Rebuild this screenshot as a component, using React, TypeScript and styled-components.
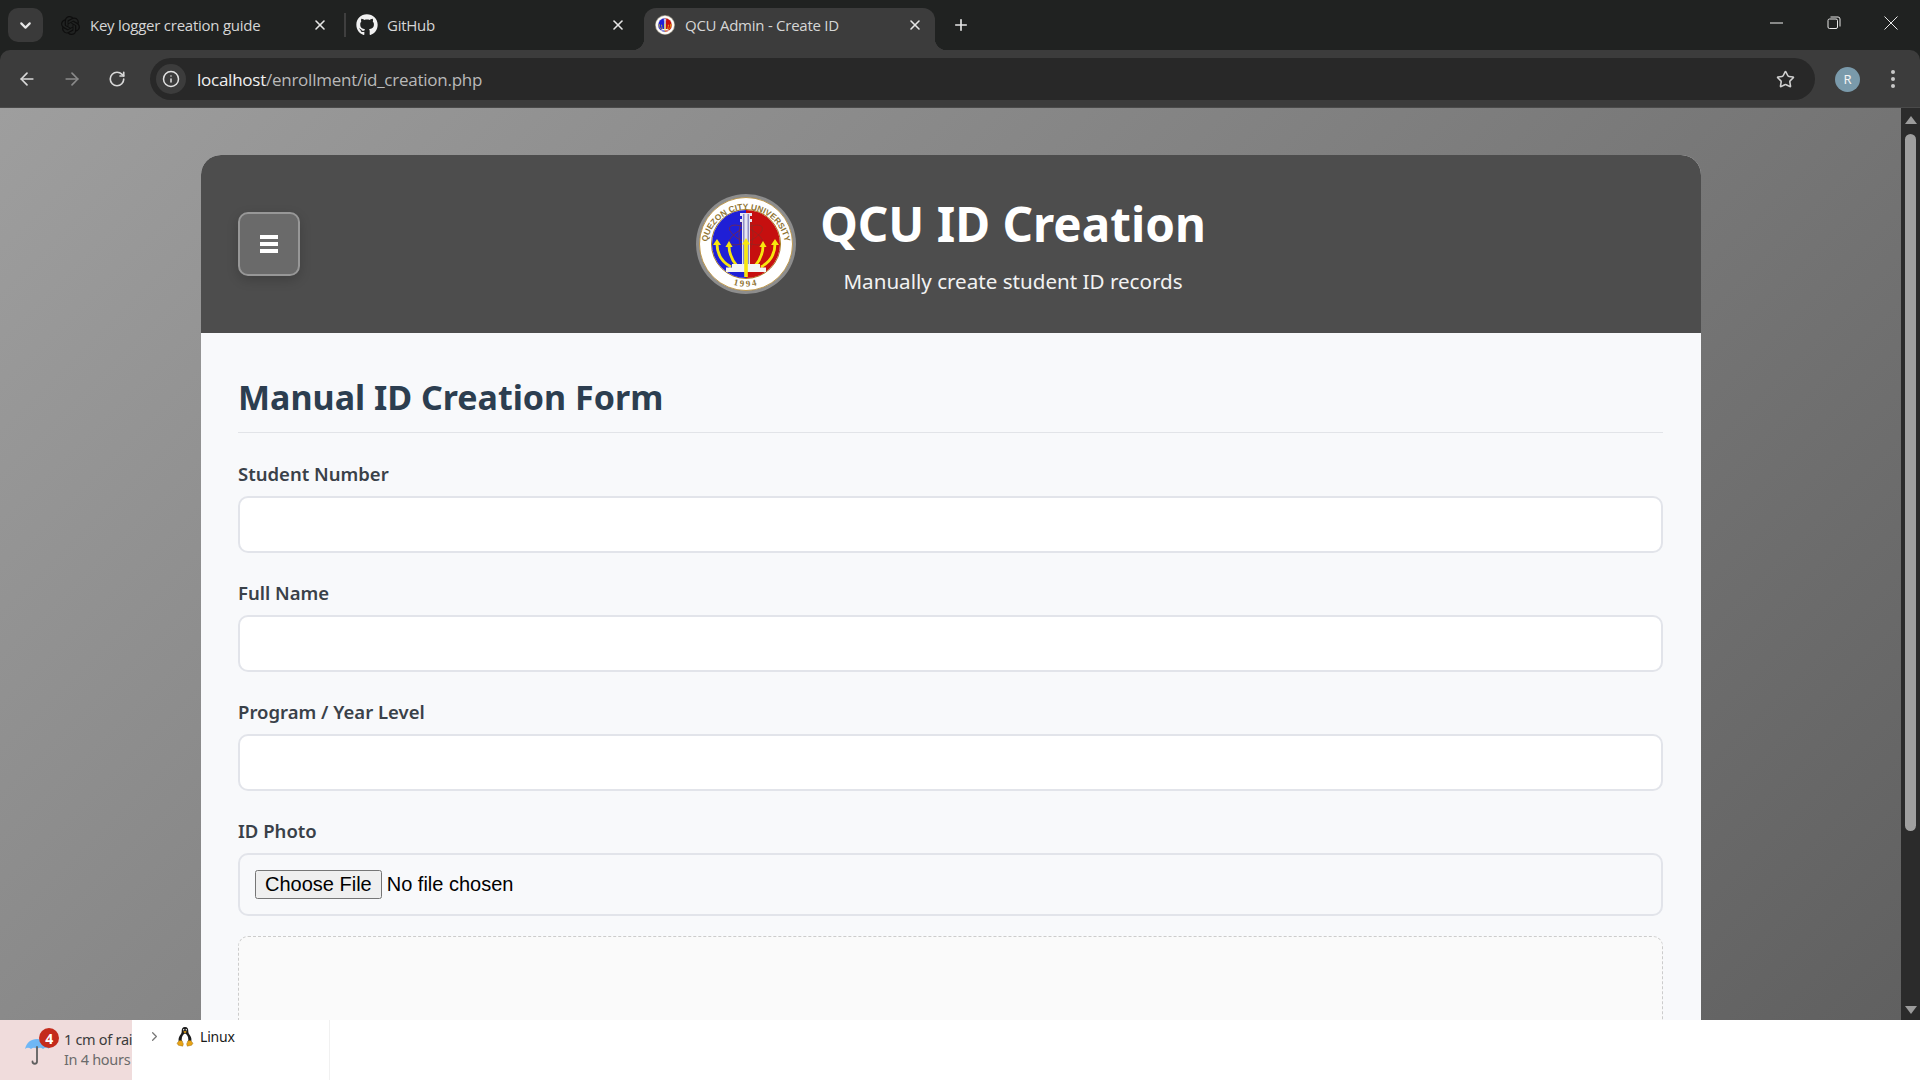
import { ArrowLeft, ArrowRight, ChevronDown, ChevronRight, Info, Plus, RotateCw, Star, X } from 'lucide-react'
import { FaGithub } from 'react-icons/fa'
import { SiOpenai } from 'react-icons/si'
import styled, { createGlobalStyle } from 'styled-components'

const fields = ['Student Number', 'Full Name', 'Program / Year Level']

function Seal({ size, plain }: { size: number; plain?: boolean }) {
  return (
    <svg width={size} height={size} viewBox="0 0 100 100">
      <circle cx="50" cy="50" r="50" fill="#8d8d8d" />
      <circle cx="50" cy="50" r="46.5" fill="#fff" stroke="#b98a2e" strokeWidth="0.8" />
      <circle cx="50" cy="50" r="34.5" fill="#fff" stroke="#a87b20" strokeWidth="1" />
      <path d="M50 16a34 34 0 0 0 0 68z" fill="#1f1fd6" />
      <path d="M50 16a34 34 0 0 1 0 68z" fill="#c60f0f" />
      {!plain && (
        <>
          <defs>
            <path id="sealTop" d="M10.500 55a39.500 39.500 0 0 1 79 0" />
            <path id="sealBottom" d="M20 80a42 42 0 0 0 60 0" />
          </defs>
          <text fill="#8f7433" fontFamily="Liberation Sans, sans-serif" fontSize="8.4" fontWeight="700">
            <textPath href="#sealTop" startOffset="50%" textAnchor="middle">
              QUEZON CITY UNIVERSITY
            </textPath>
          </text>
          <text fill="#8f7433" fontFamily="Liberation Serif, serif" fontSize="9" fontWeight="700" letterSpacing="2">
            <textPath href="#sealBottom" startOffset="50%" textAnchor="middle">
              1994
            </textPath>
          </text>
          <g fill="none" stroke="#8a2b25" strokeWidth="0.6">
            <ellipse cx="50" cy="41" rx="18" ry="7" transform="rotate(25 50 41)" />
            <ellipse cx="50" cy="41" rx="18" ry="7" transform="rotate(-25 50 41)" />
            <ellipse cx="50" cy="41" rx="7" ry="17" />
          </g>
        </>
      )}
      <path d="M44 19h12v3h-2v3h2v3h-2v46h-8V28h-2v-3h2v-3h-2z" fill="#e6e6f2" />
      <path d="M47 20h1.500v52H47zM51.500 20H53v52h-1.500z" fill="#8e8ec8" />
      <g fill="none" stroke="#f7e70e" strokeWidth="2.8">
        <path d="M35 73C26 68 21 60 21 50" />
        <path d="M41 72C36 66 33 60 33 52" />
        <path d="M59 72C64 66 67 60 67 52" />
        <path d="M65 73C74 68 79 60 79 50" />
      </g>
      <g fill="#f7e70e">
        <path d="M21 45l-4 6h8z" />
        <path d="M33 47l-3.600 6h7.200z" />
        <path d="M67 47l-3.600 6h7.200z" />
        <path d="M79 45l-4 6h8z" />
      </g>
      <path d="M36 70h28v3.500h6V78H30v-4.500h6z" fill="#f4f4f4" />
      <path d="M48.200 50h3.600v33h-3.600z" fill="#f7e70e" />
      <path d="M50 44l-4 6.500h8z" fill="#f7e70e" />
    </svg>
  )
}

function Penguin() {
  return (
    <svg width="18" height="21" viewBox="0 0 18 21">
      <path d="M9 1C6.400 1 5.600 3 5.700 5.400 5.800 7.400 4 8.800 3.100 11 2.400 12.800 2.400 14.600 3 16h12c.6-1.400.6-3.200-.1-5-.9-2.200-2.700-3.600-2.600-5.600C12.400 3 11.600 1 9 1z" fill="#1c1c1c" />
      <path d="M9 7.500c-1.900.6-3.300 3.200-3.300 5.700 0 1.500.5 2.800 1.300 3.300h4c.8-.5 1.300-1.800 1.300-3.300 0-2.500-1.400-5.100-3.300-5.700z" fill="#fff" />
      <path d="M7.200 5.800 9 5l1.800.8L9 7.200z" fill="#e8a317" />
      <circle cx="7.700" cy="3.800" r=".7" fill="#fff" />
      <circle cx="10.300" cy="3.800" r=".7" fill="#fff" />
      <path d="M3.400 14.500 1 17.200l1.300 2 4.400 1 .7-2.300-1.600-3.400zM14.600 14.500l2.400 2.700-1.300 2-4.400 1-.7-2.300 1.600-3.400z" fill="#e8a317" stroke="#8a6410" strokeWidth=".4" />
    </svg>
  )
}

function Umbrella() {
  return (
    <svg width="26" height="30" viewBox="0 0 26 30">
      <path d="M1 12C2.500 5.500 7 2 13 2s10.500 3.500 12 10c-2-1.600-4-1.600-6 0-2-1.600-4-1.600-6 0-2-1.600-4-1.600-6 0-2-1.600-4-1.600-6 0z" fill="#6fb7f5" />
      <path d="M13 10v14.500c0 3-4.500 3-4.500 0" fill="none" stroke="#5f5f5f" strokeWidth="1.800" strokeLinecap="round" />
    </svg>
  )
}

export default function App() {
  return (
    <Screen>
      <GlobalStyle />
      <TabStrip>
        <TabMenu>
          <ChevronDown size={17} strokeWidth={3} />
        </TabMenu>
        <Tab $width={301} $inset={15} $end={16}>
          <Favicon>
            <SiOpenai size={19} color="#0e0e0e" />
          </Favicon>
          <TabTitle>Key logger creation guide</TabTitle>
          <TabClose>
            <X size={16} strokeWidth={2.4} />
          </TabClose>
        </Tab>
        <TabDivider />
        <Tab $width={298} $inset={9} $end={18}>
          <Favicon>
            <FaGithub size={22} color="#f1f1f1" />
          </Favicon>
          <TabTitle>GitHub</TabTitle>
          <TabClose>
            <X size={16} strokeWidth={2.4} />
          </TabClose>
        </Tab>
        <ActiveTab>
          <Favicon>
            <Seal size={20} plain />
          </Favicon>
          <TabTitle>QCU Admin - Create ID</TabTitle>
          <TabClose>
            <X size={16} strokeWidth={2.4} />
          </TabClose>
        </ActiveTab>
        <NewTab>
          <Plus size={18} strokeWidth={2.2} />
        </NewTab>
        <WindowControls>
          <WindowButton>
            <svg width="14" height="14" viewBox="0 0 14 14">
              <path d="M0 7h13" stroke="#f0f0f0" />
            </svg>
          </WindowButton>
          <WindowButton>
            <svg width="14" height="14" viewBox="0 0 14 14" fill="none" stroke="#e8e8e8">
              <rect x="1" y="3" width="9.500" height="9.500" rx="1.500" />
              <path d="M3.500 1h7.500a2 2 0 0 1 2 2v7.500" />
            </svg>
          </WindowButton>
          <WindowButton>
            <svg width="14" height="14" viewBox="0 0 14 14">
              <path d="M.5.5l13 13M13.500.5l-13 13" stroke="#e8e8e8" />
            </svg>
          </WindowButton>
        </WindowControls>
      </TabStrip>

      <Toolbar>
        <NavIcon>
          <ArrowLeft size={20} strokeWidth={2} />
        </NavIcon>
        <NavIcon $dim>
          <ArrowRight size={20} strokeWidth={2} />
        </NavIcon>
        <NavIcon>
          <RotateCw size={18} strokeWidth={2.2} />
        </NavIcon>
        <AddressBar>
          <SiteInfo>
            <Info size={18} strokeWidth={2} />
          </SiteInfo>
          <Url>
            <strong>localhost</strong>/enrollment/id_creation.php
          </Url>
          <Star size={19} strokeWidth={2} color="#d0d0d0" />
        </AddressBar>
        <Avatar>R</Avatar>
        <Dots>
          <i />
          <i />
          <i />
        </Dots>
      </Toolbar>

      <Viewport>
        <Page>
          <Card>
            <Header>
              <MenuButton aria-label="Menu">
                <MenuLine />
                <MenuLine />
                <MenuLine />
              </MenuButton>
              <Brand>
                <Seal size={100} />
                <BrandText>
                  <Title>QCU ID Creation</Title>
                  <Subtitle>Manually create student ID records</Subtitle>
                </BrandText>
              </Brand>
            </Header>
            <FormBody>
              <FormTitle>Manual ID Creation Form</FormTitle>
              {fields.map((label) => (
                <Field key={label}>
                  <Label>{label}</Label>
                  <TextInput type="text" />
                </Field>
              ))}
              <Field $gap={20}>
                <Label>ID Photo</Label>
                <FileInput type="file" />
              </Field>
              <PhotoPreview />
            </FormBody>
          </Card>
        </Page>
        <Scrollbar>
          <ScrollUp />
          <ScrollThumb />
          <ScrollDown />
        </Scrollbar>
      </Viewport>

      <BottomStrip>
        <Weather>
          <WeatherIcon>
            <Umbrella />
            <Badge>4</Badge>
          </WeatherIcon>
          <WeatherText>
            <span>1 cm of rain</span>
            <WeatherNote>In 4 hours</WeatherNote>
          </WeatherText>
        </Weather>
        <FolderBar>
          <ChevronRight size={15} color="#777" />
          <Penguin />
          <FolderName>Linux</FolderName>
        </FolderBar>
      </BottomStrip>
    </Screen>
  )
}

// Style

const GlobalStyle = createGlobalStyle`
  html, body {
    margin: 0;
    height: 100%;
    overflow: hidden;
  }
  * {
    box-sizing: border-box;
  }
`

const Screen = styled.div`
  display: flex;
  flex-direction: column;
  height: 100vh;
  background: #202221;
  font-family: 'Noto Sans', sans-serif;
`

const TabStrip = styled.div`
  display: flex;
  align-items: flex-start;
  height: 50px;
  flex: none;
  padding: 8px 0 0 8px;
  color: #e4e4e4;
`

const TabMenu = styled.div`
  display: flex;
  align-items: center;
  justify-content: center;
  width: 35px;
  height: 34px;
  border-radius: 10px;
  background: #3a3a3a;
  color: #e8e8e8;
`

const Tab = styled.div<{ $width: number; $inset: number; $end: number }>`
  display: flex;
  align-items: center;
  width: ${(p) => p.$width}px;
  height: 34px;
  padding: 0 ${(p) => p.$end}px 0 ${(p) => p.$inset}px;
`

const ActiveTab = styled.div`
  position: relative;
  display: flex;
  align-items: center;
  width: 291px;
  height: 42px;
  padding: 0 12px 8px 9px;
  border-radius: 12px 12px 0 0;
  background: #3c3c3c;

  &::before,
  &::after {
    content: '';
    position: absolute;
    bottom: 0;
    width: 12px;
    height: 12px;
  }
  &::before {
    left: -12px;
    background: radial-gradient(circle at 0 0, transparent 12px, #3c3c3c 12.5px);
  }
  &::after {
    right: -12px;
    background: radial-gradient(circle at 100% 0, transparent 12px, #3c3c3c 12.5px);
  }
`

const TabDivider = styled.div`
  width: 2px;
  height: 24px;
  margin-top: 5px;
  background: #3f3f3f;
`

const Favicon = styled.div`
  display: flex;
  align-items: center;
  justify-content: center;
  width: 24px;
  flex: none;
`

const TabTitle = styled.div`
  flex: 1;
  padding-left: 8px;
  font-family: 'Open Sans', sans-serif;
  font-size: 15px;
  letter-spacing: -0.25px;
  color: #d6d6d6;
  white-space: nowrap;
`

const TabClose = styled.div`
  display: flex;
  color: #e6e6e6;
`

const NewTab = styled.div`
  display: flex;
  align-items: center;
  justify-content: center;
  width: 50px;
  height: 34px;
  margin-left: 1px;
  color: #e6e6e6;
`

const WindowControls = styled.div`
  display: flex;
  margin-left: auto;
  margin-top: -8px;
  margin-right: 1px;
`

const WindowButton = styled.div`
  display: flex;
  align-items: center;
  justify-content: center;
  width: 57px;
  height: 46px;
`

const Toolbar = styled.div`
  display: flex;
  align-items: center;
  height: 58px;
  flex: none;
  padding: 1px 0 0 9px;
  border-bottom: 1px solid #4a4a4a;
  border-radius: 10px 10px 0 0;
  background: #3c3c3c;
`

const NavIcon = styled.div<{ $dim?: boolean }>`
  display: flex;
  align-items: center;
  justify-content: center;
  width: 36px;
  margin-right: 9px;
  color: ${(p) => (p.$dim ? '#8a8a8a' : '#d8d8d8')};
`

const AddressBar = styled.div`
  display: flex;
  align-items: center;
  width: 1665px;
  height: 42px;
  margin-left: 6px;
  padding: 0 20px 0 6px;
  border-radius: 21px;
  background: #282828;
`

const SiteInfo = styled.div`
  display: flex;
  align-items: center;
  justify-content: center;
  width: 30px;
  height: 30px;
  border-radius: 50%;
  background: #3c3c3c;
  color: #e2e2e2;
`

const Url = styled.div`
  flex: 1;
  padding-left: 11px;
  font-family: 'Open Sans', sans-serif;
  font-size: 17px;
  letter-spacing: -0.25px;
  color: #b9b9b9;

  strong {
    font-weight: 400;
    color: #f0f0f0;
  }
`

const Avatar = styled.div`
  display: flex;
  align-items: center;
  justify-content: center;
  width: 25px;
  height: 25px;
  margin-left: 20px;
  border-radius: 50%;
  background: #7a9aab;
  font-size: 13px;
  color: #f2f2f2;
`

const Dots = styled.div`
  display: flex;
  flex-direction: column;
  gap: 3px;
  margin-left: 31px;

  i {
    width: 4px;
    height: 4px;
    border-radius: 50%;
    background: #c8c8c8;
  }
`

const Viewport = styled.div`
  display: flex;
  height: 912px;
  flex: none;
  overflow: hidden;
`

const Page = styled.div`
  flex: 1;
  padding: 47px 200px 0 201px;
  background: linear-gradient(135deg, #9e9e9e 0%, #606060 100%);
`

const Card = styled.div`
  width: 1500px;
  border-radius: 20px 20px 0 0;
  overflow: hidden;
  background: #f8f9fb;
`

const Header = styled.header`
  display: grid;
  grid-template-columns: 1fr auto 1fr;
  align-items: center;
  height: 178px;
  padding: 0 37px;
  background: #4d4d4d;
`

const MenuButton = styled.button`
  display: flex;
  flex-direction: column;
  align-items: center;
  justify-content: center;
  gap: 3.5px;
  width: 62px;
  height: 64px;
  padding: 0;
  border: 2px solid #979797;
  border-radius: 10px;
  background: #6a6a6a;
  box-shadow: 0 4px 12px rgba(0, 0, 0, 0.18);
`

const MenuLine = styled.span`
  width: 18px;
  height: 3.5px;
  background: #fff;
`

const Brand = styled.div`
  display: flex;
  align-items: center;
  gap: 24px;
`

const BrandText = styled.div`
  display: flex;
  flex-direction: column;
  align-items: center;
  margin-bottom: 3px;
  color: #fff;
`

const Title = styled.h1`
  margin: 0;
  font-size: 47.6px;
  font-weight: 700;
  line-height: 68px;
  white-space: nowrap;
`

const Subtitle = styled.p`
  margin: 8px 0 0;
  font-size: 20.6px;
  line-height: 30px;
  color: #f2f2f2;
`

const FormBody = styled.div`
  padding: 38px 38px 0 37px;
`

const FormTitle = styled.h2`
  margin: 0 0 26px;
  padding-bottom: 9px;
  border-bottom: 1px solid #e2e4e8;
  font-size: 34px;
  font-weight: 700;
  line-height: 52px;
  color: #2c3e50;
`

const Field = styled.div<{ $gap?: number }>`
  margin-bottom: ${(p) => p.$gap ?? 25}px;
`

const Label = styled.label`
  display: block;
  margin-bottom: 7px;
  font-size: 18.5px;
  font-weight: 600;
  line-height: 30px;
  color: #3a4149;
`

const TextInput = styled.input`
  display: block;
  width: 100%;
  height: 57px;
  padding: 0 18px;
  border: 2px solid #e2e4ea;
  border-radius: 10px;
  background: #fff;
`

const FileInput = styled.input`
  display: block;
  width: 100%;
  height: 63px;
  padding: 15px;
  border: 2px solid #e2e4ea;
  border-radius: 10px;
  background: #f8f9fb;
  font-family: 'Liberation Sans', Arial, sans-serif;
  font-size: 20px;
  line-height: 27px;
  color: #000;

  &::file-selector-button {
    padding: 1px 8px;
    margin-right: 5px;
  }
`

const PhotoPreview = styled.div`
  height: 200px;
  border: 1px dashed #cccccc;
  border-radius: 10px;
  background: #fafafa;
`

const Scrollbar = styled.div`
  display: flex;
  flex-direction: column;
  align-items: center;
  width: 19px;
  flex: none;
  padding-top: 8px;
  background: #2b2b2b;
`

const ScrollUp = styled.div`
  width: 0;
  height: 0;
  border-left: 6.5px solid transparent;
  border-right: 6.5px solid transparent;
  border-bottom: 8px solid #9c9c9c;
`

const ScrollDown = styled.div`
  width: 0;
  height: 0;
  margin-top: 175px;
  border-left: 6.5px solid transparent;
  border-right: 6.5px solid transparent;
  border-top: 8px solid #9c9c9c;
`

const ScrollThumb = styled.div`
  width: 11px;
  height: 697px;
  margin-top: 10px;
  border-radius: 6px;
  background: #9f9f9f;
`

const BottomStrip = styled.div`
  display: flex;
  flex: 1;
  background: #fff;
`

const Weather = styled.div`
  display: flex;
  width: 132px;
  flex: none;
  overflow: hidden;
  padding: 8px 0 0 24px;
  background: #f0dcdc;
  font-size: 14.5px;
  letter-spacing: -0.3px;
  color: #3b3b3b;
`

const WeatherIcon = styled.div`
  position: relative;
  width: 40px;
  flex: none;
  padding-top: 9px;
`

const Badge = styled.span`
  position: absolute;
  top: 0;
  left: 15px;
  display: flex;
  align-items: center;
  justify-content: center;
  width: 20px;
  height: 20px;
  border-radius: 50%;
  background: #c42b1c;
  font-size: 14px;
  font-weight: 700;
  color: #fff;
`

const WeatherText = styled.div`
  display: flex;
  flex-direction: column;
  padding-top: 1px;
  line-height: 20px;
  white-space: nowrap;
`

const WeatherNote = styled.span`
  color: #6b6b6b;
`

const FolderBar = styled.div`
  display: flex;
  align-items: center;
  gap: 14px;
  width: 198px;
  height: 60px;
  padding: 0 0 28px 15px;
  border-right: 1px solid #f1f1f1;
`

const FolderName = styled.span`
  margin-left: -8px;
  font-size: 14px;
  letter-spacing: -0.2px;
  color: #1a1a1a;
`
